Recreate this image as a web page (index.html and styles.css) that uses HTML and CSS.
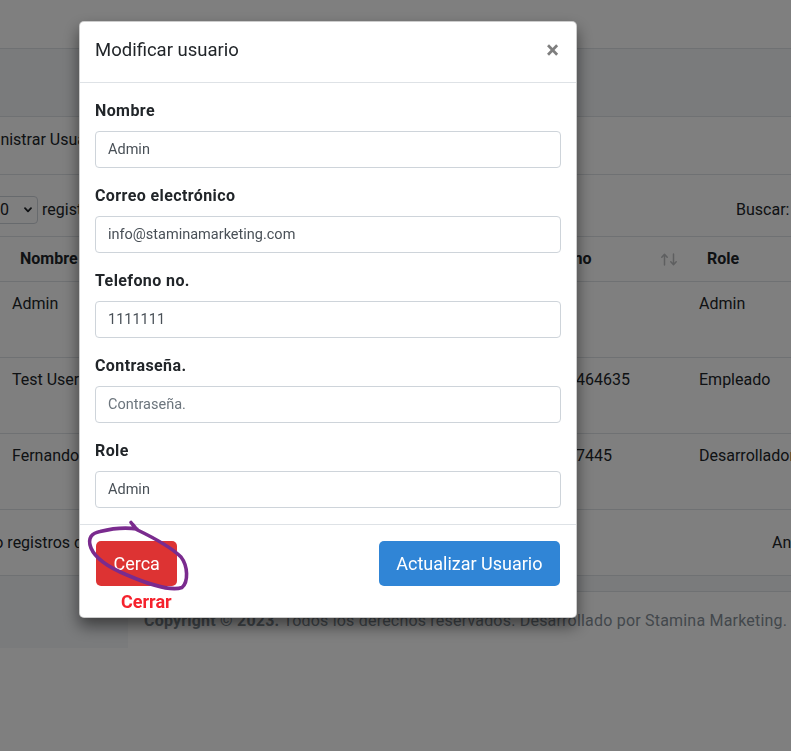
FILE: index.html
```html
<!DOCTYPE html>
<html lang="es">
<head>
<meta charset="utf-8">
<title>Modificar usuario</title>
<link rel="stylesheet" href="styles.css">
</head>
<body>
<div class="page">
  <header class="navbar"></header>
  <div class="wrapper">
    <div class="content-header"></div>
    <section class="card">
      <div class="card-header"><h3 class="card-title">Administrar Usuarios</h3></div>
      <div class="card-body">
        <div class="dt-controls">
          <div class="dt-length">
            <span class="select"><span>10</span><svg class="chev" width="8" height="6" viewBox="0 0 8 6"><path d="M1 1.2 4 4.4 7 1.2" fill="none" stroke="#212529" stroke-width="1.8" stroke-linecap="round" stroke-linejoin="round"/></svg></span>
            <span>registros</span>
          </div>
          <div class="dt-filter"><span>Buscar:</span><span class="search"></span></div>
        </div>
        <div class="table">
          <div class="tr thead">
            <div class="th">Nombre</div>
            <div class="th">Correo electrónico</div>
            <div class="th th-phone"><span>Teléfono</span><svg class="sort" width="17" height="13" viewBox="0 0 17 13"><path d="M3.5 12V1.5M0.8 4.2 3.5 1.3 6.2 4.2M12.5 1v10.5M9.8 8.8l2.7 2.9 2.7-2.9" fill="none" stroke="#bcbec0" stroke-width="1.5" stroke-linecap="round" stroke-linejoin="round"/></svg></div>
            <div class="th">Role</div>
          </div>
          <div class="tr row">
            <div class="td">Admin</div>
            <div class="td">info@staminamarketing.com</div>
            <div class="td"></div>
            <div class="td">Admin</div>
          </div>
          <div class="tr row">
            <div class="td">Test User</div>
            <div class="td">test@staminamarketing.com</div>
            <div class="td">3104464635</div>
            <div class="td">Empleado</div>
          </div>
          <div class="tr row">
            <div class="td">Fernando</div>
            <div class="td">fernando@staminamarketing.com</div>
            <div class="td">31027445</div>
            <div class="td">Desarrollador</div>
          </div>
        </div>
        <div class="dt-footer">
          <span class="info">Mostrando registros del 1 al 3 de un total de 3 registros</span>
          <span class="paging">Anterior</span>
        </div>
      </div>
    </section>
    <div class="gap"></div>
  </div>
  <div class="bottom">
    <div class="side-stub"></div>
    <footer class="main-footer"><strong>Copyright © 2023.</strong> Todos los derechos reservados. Desarrollado por Stamina Marketing.</footer>
  </div>
</div>

<div class="backdrop"></div>

<div class="modal">
  <div class="modal-header">
    <h5 class="modal-title">Modificar usuario</h5>
    <button class="close" type="button">×</button>
  </div>
  <div class="modal-body">
    <div class="form-group">
      <label>Nombre</label>
      <input class="form-control" type="text" value="Admin">
    </div>
    <div class="form-group">
      <label>Correo electrónico</label>
      <input class="form-control" type="text" value="info@staminamarketing.com">
    </div>
    <div class="form-group">
      <label>Telefono no.</label>
      <input class="form-control" type="text" value="1111111">
    </div>
    <div class="form-group">
      <label>Contraseña.</label>
      <input class="form-control" type="password" placeholder="Contraseña.">
    </div>
    <div class="form-group">
      <label>Role</label>
      <input class="form-control" type="text" value="Admin">
    </div>
  </div>
  <div class="modal-footer">
    <div class="cancel-col">
      <button class="btn btn-red" type="button">Cerca</button>
      <div class="cerrar">Cerrar</div>
    </div>
    <button class="btn btn-blue" type="button">Actualizar Usuario</button>
  </div>
  <svg class="scribble" width="498" height="596" viewBox="79 21 498 596">
    <path d="M131 522.5C133 525 135 527 136.5 529.5C150 536 170 546 181 557C188 566 188.5 582 182 587.5C172 591 150 585 127 575C110 568 96 560 91 548C87 538 92 533 100 531.5C112 528.5 125 527 137 529" fill="none" stroke="#7a2b8e" stroke-width="3.6" stroke-linecap="round" stroke-linejoin="round"/>
  </svg>
</div>
</body>
</html>
```

FILE: styles.css
```css
html, body {
  margin: 0;
  padding: 0;
}

body {
  font-family: Roboto, "Liberation Sans", Arial, sans-serif;
  font-size: 16px;
  line-height: 1.5;
  color: #212529;
  background: #fff;
}

.page {
  width: 791px;
  height: 751px;
  overflow: hidden;
}

.navbar {
  height: 49px;
  box-sizing: border-box;
  background: #fff;
  border-bottom: 1px solid #dee2e6;
}

.wrapper {
  background: #f4f6f9;
}

.content-header {
  height: 67px;
}

.card {
  width: 1010px;
  margin-left: -20px;
  background: #fff;
  border-top: 1px solid #dee2e6;
  border-bottom: 1px solid #dee2e6;
}

.card-header {
  height: 58px;
  box-sizing: border-box;
  padding: 12px 20px 0;
  border-bottom: 1px solid #dee2e6;
}

.card-title {
  margin: 0;
  font-size: 16px;
  font-weight: 400;
  line-height: 21px;
  text-indent: -37px;
}

.card-body {
  padding: 0 20px;
}

.dt-controls {
  display: grid;
  grid-template-columns: 736px 1fr;
  height: 61px;
  box-sizing: border-box;
  padding-top: 8px;
  align-items: center;
}

.dt-length {
  display: flex;
  align-items: center;
  gap: 4px;
}

.select {
  display: flex;
  align-items: center;
  justify-content: space-between;
  width: 56px;
  height: 28px;
  box-sizing: border-box;
  margin-left: -18px;
  padding: 0 5px 0 8px;
  border: 1px solid #ced4da;
  border-radius: 4px;
}

.chev {
  display: block;
}

.dt-filter {
  display: flex;
  align-items: center;
  gap: 8px;
}

.search {
  display: block;
  width: 170px;
  height: 31px;
  box-sizing: border-box;
  border: 1px solid #ced4da;
  border-radius: 4px;
}

.table {
  border-top: 1px solid #dee2e6;
}

.tr {
  display: grid;
  grid-template-columns: 150px 378px 159px 1fr;
  border-bottom: 1px solid #dee2e6;
  white-space: nowrap;
}

.thead {
  height: 45px;
  box-sizing: border-box;
  align-items: center;
  font-weight: 700;
}

.th {
  padding-left: 20px;
}

.th-phone {
  display: flex;
  align-items: center;
  justify-content: space-between;
  padding-left: 0;
  padding-right: 9px;
}

.sort {
  display: block;
}

.row {
  height: 76px;
  box-sizing: border-box;
  align-items: start;
}

.td {
  padding: 10px 12px 0;
}

.dt-footer {
  display: grid;
  grid-template-columns: 760px 1fr;
  height: 65px;
  align-items: center;
  white-space: nowrap;
}

.info {
  margin-left: -74px;
}

.paging {
  padding-left: 12px;
}

.gap {
  height: 15px;
}

.bottom {
  display: flex;
  height: 57px;
}

.side-stub {
  width: 128px;
  flex: none;
  background: #f4f6f9;
}

.main-footer {
  flex: 1;
  box-sizing: border-box;
  padding: 17px 16px 0;
  border-top: 1px solid #dee2e6;
  color: #869099;
  letter-spacing: 0.2px;
  white-space: nowrap;
  background: #fff;
}

.backdrop {
  position: fixed;
  inset: 0;
  background: rgba(0, 0, 0, 0.5);
}

.modal {
  position: fixed;
  left: 79px;
  top: 21px;
  width: 498px;
  box-sizing: border-box;
  background: #fff;
  border: 1px solid rgba(0, 0, 0, 0.2);
  border-radius: 5px;
  box-shadow: 0 8px 16px rgba(0, 0, 0, 0.5);
}

.modal-header {
  display: flex;
  align-items: center;
  padding: 13px 15px 17px;
  border-bottom: 1px solid #dee2e6;
}

.modal-title {
  margin: 0;
  font-size: 18.5px;
  font-weight: 400;
  line-height: 30px;
}

.close {
  margin-left: auto;
  padding: 0 2px;
  border: none;
  background: transparent;
  font-family: Roboto, "Liberation Sans", Arial, sans-serif;
  font-size: 24px;
  font-weight: 700;
  line-height: 1;
  color: #000;
  opacity: 0.5;
  text-shadow: 0 1px 0 #fff;
}

.modal-body {
  padding: 16px 15px 0;
}

.form-group {
  margin-bottom: 16px;
}

.form-group label {
  display: block;
  margin-bottom: 8px;
  font-weight: 700;
  line-height: 24px;
  letter-spacing: 0.4px;
}

.form-control {
  display: block;
  width: 100%;
  height: 37px;
  box-sizing: border-box;
  margin: 0;
  padding: 0 12px;
  border: 1px solid #ced4da;
  border-radius: 4px;
  font-family: Roboto, "Liberation Sans", Arial, sans-serif;
  font-size: 14.5px;
  color: #495057;
  background: #fff;
}

.form-control::placeholder {
  color: #6c757d;
  opacity: 1;
}

.modal-footer {
  display: flex;
  justify-content: space-between;
  align-items: flex-start;
  padding: 16px 16px 5px;
  border-top: 1px solid #dee2e6;
}

.cancel-col {
  display: flex;
  flex-direction: column;
  align-items: flex-start;
}

.btn {
  height: 45px;
  padding: 0 17.5px;
  border: none;
  border-radius: 5px;
  font-family: Roboto, "Liberation Sans", Arial, sans-serif;
  font-size: 18px;
  line-height: 45px;
  color: #fff;
}

.btn-red {
  background: #dd3333;
}

.btn-blue {
  background: #3085d6;
}

.cerrar {
  margin: 5px 0 0 25px;
  font-size: 18px;
  font-weight: 700;
  line-height: 21px;
  color: #f5222d;
}

.scribble {
  position: absolute;
  left: -1px;
  top: -1px;
  overflow: visible;
  pointer-events: none;
}
```
